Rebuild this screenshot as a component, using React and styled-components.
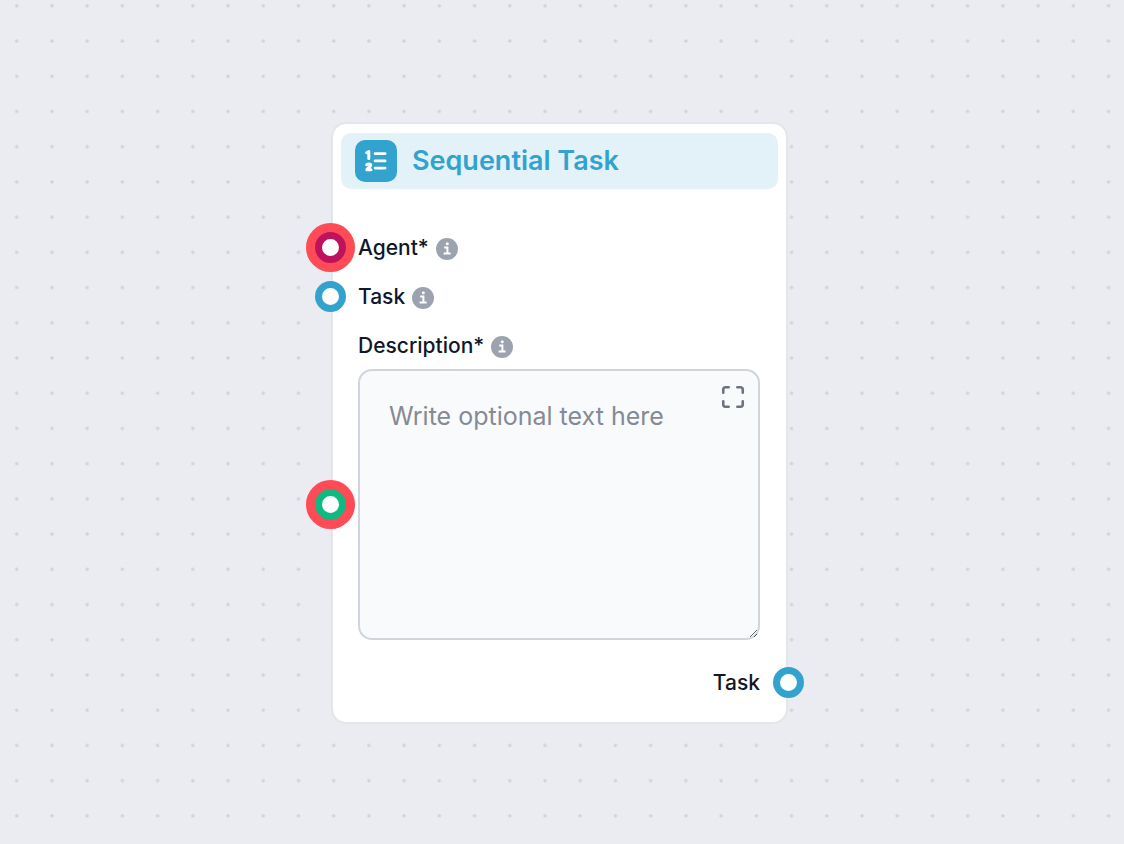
import React from "react"
import styled, { createGlobalStyle } from "styled-components"
import { Maximize } from "lucide-react"

const colors = {
  canvas: "#ebecf1",
  dot: "#d1d3d8",
  line: "#e5e6ea",
  text: "#0f172a",
  muted: "#9ca3af",
  placeholder: "#858a94",
  blue: "#32a3ce",
  blueSoft: "#e3f2f8",
  pink: "#be125d",
  green: "#10b981",
  alert: "#fe4b55",
}

const GlobalStyle = createGlobalStyle`
  *, *::before, *::after {
    box-sizing: border-box;
  }

  body {
    margin: 0;
    background: ${colors.canvas};
    color: ${colors.text};
    font-family: Inter, "Liberation Sans", sans-serif;
  }
`

const Canvas = styled.main`
  position: relative;
  min-height: 100vh;
  overflow: hidden;
`

const Dots = styled.svg`
  position: absolute;
  inset: 0;
  width: 100%;
  height: 100%;
`

const Node = styled.article`
  position: absolute;
  left: 332px;
  top: 123px;
  width: 455px;
  padding: 9px 8px 15px;
  background: #fff;
  border: 1px solid ${colors.line};
  border-radius: 14px;
  box-shadow: 0 0 1px 1px rgba(15, 23, 42, 0.03);
`

const Header = styled.header`
  display: flex;
  align-items: center;
  gap: 15px;
  height: 56px;
  padding: 0 14px;
  background: ${colors.blueSoft};
  border-radius: 10px;
  color: ${colors.blue};

  h1 {
    margin: 0;
    font-size: 27px;
    line-height: 36px;
    font-weight: 600;
  }
`

const IconTile = styled.span`
  display: grid;
  place-items: center;
  width: 42px;
  height: 42px;
  border-radius: 10px;
  background: ${colors.blue};
  color: #fff;
`

const Body = styled.div`
  padding: 34px 18px 0 17px;
`

const Row = styled.div`
  position: relative;
  display: flex;
  align-items: center;
  justify-content: ${({ $end }) => ($end ? "flex-end" : "flex-start")};
  gap: 7px;
  height: 49px;
  margin-top: ${({ $end }) => ($end ? "18px" : "0")};
  font-size: 21px;
  line-height: 30px;
  font-weight: 500;
`

const InfoButton = styled.button`
  display: flex;
  padding: 2px 0 0;
  border: 0;
  background: none;
  color: ${colors.muted};
  cursor: help;
`

// connection point, centred on the node's left or right edge
const Handle = styled.button`
  position: absolute;
  top: 50%;
  ${({ $side }) => ($side === "right" ? "right: -44px;" : "left: -43px;")}
  width: 31px;
  height: 31px;
  margin-top: -16px;
  padding: 0;
  border: 7px solid ${({ $color }) => $color};
  border-radius: 50%;
  background: #fff;
  box-shadow: ${({ $required }) => ($required ? `0 0 0 9px ${colors.alert}` : "none")};
  cursor: crosshair;
`

const Field = styled.div`
  position: relative;
  display: flex;
  margin-top: -1px;
`

const TextArea = styled.textarea`
  display: block;
  width: 100%;
  height: 271px;
  margin: 0;
  padding: 27px 29px;
  border: 2px solid #d1d5db;
  border-radius: 14px;
  background: #f9fafc;
  color: ${colors.text};
  font: 400 25px/36px Inter, "Liberation Sans", sans-serif;
  resize: vertical;

  &::placeholder {
    color: ${colors.placeholder};
    opacity: 1;
  }
`

const ExpandButton = styled.button`
  position: absolute;
  top: 15px;
  right: 14px;
  display: flex;
  padding: 0;
  border: 0;
  background: none;
  color: #6b7280;
  cursor: pointer;
`

const NumberedListIcon = () => (
  <svg
    width="30"
    height="30"
    viewBox="0 0 30 30"
    fill="none"
    stroke="currentColor"
    strokeLinecap="round"
    strokeLinejoin="round"
    aria-hidden="true"
  >
    <path strokeWidth="2.6" d="M14 7.6h10.2M14 14.9h10.2M14 22.1h10.2" />
    <path strokeWidth="3" d="M5.7 6.8 7.8 5.6v7" />
    <path strokeWidth="3" d="M5.7 18.8c.4-1.2 4.1-1.4 4.1.5 0 1.6-3.2 2.6-4 4.5h4.2" />
  </svg>
)

const InfoIcon = () => (
  <svg width="22" height="22" viewBox="0 0 22 22" aria-hidden="true">
    <circle cx="11" cy="11" r="11" fill="currentColor" />
    <circle cx="11.3" cy="5.8" r="1.5" fill="#fff" />
    <path d="M8.2 9.5h3.2v6M7.6 15.5h7" fill="none" stroke="#fff" strokeWidth="2" />
  </svg>
)

const Info = ({ label }) => (
  <InfoButton type="button" aria-label={`About ${label}`}>
    <InfoIcon />
  </InfoButton>
)

const inputs = [
  { name: "Agent", required: true, color: colors.pink },
  { name: "Task", required: false, color: colors.blue },
]

const App = () => (
  <>
    <GlobalStyle />
    <Canvas>
      <Dots aria-hidden="true">
        <pattern
          id="dots"
          width="20"
          height="20"
          patternUnits="userSpaceOnUse"
          patternTransform="translate(-0.9 -11.8) scale(1.761)"
        >
          <circle cx="10" cy="10" r="1" fill={colors.dot} />
        </pattern>
        <rect width="100%" height="100%" fill="url(#dots)" />
      </Dots>
      <Node>
        <Header>
          <IconTile>
            <NumberedListIcon />
          </IconTile>
          <h1>Sequential Task</h1>
        </Header>
        <Body>
          {inputs.map(({ name, required, color }) => (
            <Row key={name}>
              <Handle
                type="button"
                aria-label={`${name} input`}
                $color={color}
                $required={required}
              />
              <span>{name}{required && "*"}</span>
              <Info label={name} />
            </Row>
          ))}
          <Row>
            <label htmlFor="description">Description*</label>
            <Info label="Description" />
          </Row>
          <Field>
            <Handle
              type="button"
              aria-label="Description input"
              $color={colors.green}
              $required
            />
            <TextArea id="description" placeholder="Write optional text here" />
            <ExpandButton type="button" aria-label="Expand editor">
              <Maximize size={26} strokeWidth={2.4} />
            </ExpandButton>
          </Field>
          <Row $end>
            <span>Task</span>
            <Handle
              type="button"
              aria-label="Task output"
              $side="right"
              $color={colors.blue}
            />
          </Row>
        </Body>
      </Node>
    </Canvas>
  </>
)

export default App
